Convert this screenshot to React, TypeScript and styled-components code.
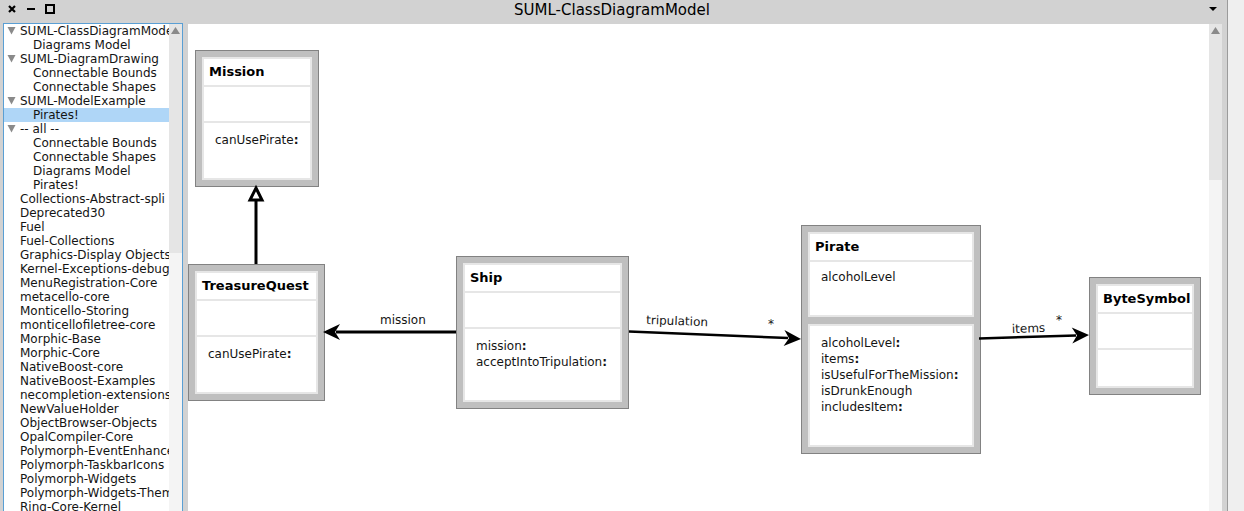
import React from 'react';
import styled, { createGlobalStyle } from 'styled-components';

const GlobalStyle = createGlobalStyle`
  *, *::before, *::after { box-sizing: border-box; }
  body {
    margin: 0;
    background: #efefef;
    color: #141414;
    font-family: 'DejaVu Sans', sans-serif;
    font-size: 12px;
  }
  button { font: inherit; color: inherit; }
  ul { list-style: none; margin: 0; padding: 0; }
`;

const Desktop = styled.div`
  display: flex;
  height: 100vh;
  padding-right: 16px;
  overflow: hidden;
`;

const Window = styled.main`
  flex: 1;
  min-width: 0;
  display: flex;
  flex-direction: column;
  background: #d2d2d2;
  border-right: 1px solid #9b9b9b;
`;

const TitleBar = styled.header`
  flex: none;
  height: 23px;
  display: grid;
  grid-template-columns: 1fr auto 1fr;
  align-items: start;
  padding: 0 8px 0 5px;
`;

const Title = styled.h1`
  margin: 0;
  font-size: 15px;
  line-height: 20px;
  font-weight: 400;
  color: #000;
`;

const WindowControls = styled.div<{ $end?: boolean }>`
  display: flex;
  gap: 6px;
  padding-top: 2px;
  justify-content: ${(p) => (p.$end ? 'flex-end' : 'flex-start')};
`;

const ControlButton = styled.button`
  display: flex;
  align-items: center;
  justify-content: center;
  width: 13px;
  height: 14px;
  padding: 0;
  border: 0;
  background: none;
`;

const Body = styled.div`
  flex: 1;
  min-height: 0;
  display: flex;
  gap: 5px;
  padding: 0 5px 0 3px;
`;

const Sidebar = styled.nav`
  flex: none;
  width: 180px;
  display: flex;
  background: #fff;
  border: 1px solid #5a9fd4;
  border-bottom: 0;
`;

const PackageList = styled.ul`
  flex: 1;
  min-width: 0;
  overflow: hidden;
`;

const PackageButton = styled.button<{ $level: number; $selected?: boolean }>`
  display: flex;
  align-items: center;
  width: 100%;
  height: 14px;
  padding: 0 0 0 ${(p) => (p.$level ? 29 : 3)}px;
  border: 0;
  background: ${(p) => (p.$selected ? '#afd6f7' : 'transparent')};
  line-height: 14px;
  text-align: left;
  white-space: nowrap;
`;

const Toggle = styled.span`
  flex: none;
  display: flex;
  width: 13px;
`;

const ScrollTrack = styled.div`
  flex: none;
  width: 13px;
  background: #f4f4f4;
`;

const ScrollThumb = styled.div<{ $size: number }>`
  display: flex;
  justify-content: center;
  height: ${(p) => p.$size}%;
  padding-top: 3px;
  background: #e5e5e5;
`;

const CanvasPane = styled.section`
  flex: 1;
  min-width: 0;
  display: flex;
  margin-top: 1px;
  background: #fff;
`;

const Canvas = styled.div`
  position: relative;
  flex: 1;
  min-width: 0;
  overflow: hidden;
`;

const Connectors = styled.svg`
  position: absolute;
  inset: 0;
  width: 100%;
  height: 100%;
`;

const ClassNode = styled.article<{ $x: number; $y: number; $width: number }>`
  position: absolute;
  left: ${(p) => p.$x}px;
  top: ${(p) => p.$y}px;
  width: ${(p) => p.$width}px;
  display: flex;
  flex-direction: column;
  gap: 7px;
  padding: 6px;
  background: #bfbfbf;
  border: 1px solid #828282;
`;

const NodePanel = styled.div`
  background: #fff;
  border: 2px solid #e6e6e6;
`;

const ClassName = styled.h2`
  margin: 0;
  height: 26px;
  padding-left: 5px;
  font-size: 13px;
  line-height: 26px;
  color: #000;
  white-space: nowrap;
`;

const Attributes = styled.ul`
  border-top: 2px solid #e6e6e6;
  padding: 7px 0 30px 11px;
  line-height: 16px;
  &:empty { padding: 17px 0; }
`;

const Methods = styled.ul<{ $detached?: boolean }>`
  border-top: ${(p) => (p.$detached ? '0' : '2px solid #e6e6e6')};
  padding: 9px 0 30px 11px;
  line-height: 16px;
  white-space: nowrap;
  &:empty { padding: 18px 0; }
`;

interface TreeItem {
  name: string;
  level?: number;
  parent?: boolean;
  selected?: boolean;
}

const packages: TreeItem[] = [
  { name: 'SUML-ClassDiagramModel', parent: true },
  { name: 'Diagrams Model', level: 1 },
  { name: 'SUML-DiagramDrawing', parent: true },
  { name: 'Connectable Bounds', level: 1 },
  { name: 'Connectable Shapes', level: 1 },
  { name: 'SUML-ModelExample', parent: true },
  { name: 'Pirates!', level: 1, selected: true },
  { name: '-- all --', parent: true },
  { name: 'Connectable Bounds', level: 1 },
  { name: 'Connectable Shapes', level: 1 },
  { name: 'Diagrams Model', level: 1 },
  { name: 'Pirates!', level: 1 },
  { name: 'Collections-Abstract-spli' },
  { name: 'Deprecated30' },
  { name: 'Fuel' },
  { name: 'Fuel-Collections' },
  { name: 'Graphics-Display Objects' },
  { name: 'Kernel-Exceptions-debug' },
  { name: 'MenuRegistration-Core' },
  { name: 'metacello-core' },
  { name: 'Monticello-Storing' },
  { name: 'monticellofiletree-core' },
  { name: 'Morphic-Base' },
  { name: 'Morphic-Core' },
  { name: 'NativeBoost-core' },
  { name: 'NativeBoost-Examples' },
  { name: 'necompletion-extensions' },
  { name: 'NewValueHolder' },
  { name: 'ObjectBrowser-Objects' },
  { name: 'OpalCompiler-Core' },
  { name: 'Polymorph-EventEnhance' },
  { name: 'Polymorph-TaskbarIcons' },
  { name: 'Polymorph-Widgets' },
  { name: 'Polymorph-Widgets-Them' },
  { name: 'Ring-Core-Kernel' },
];

interface UmlClass {
  name: string;
  x: number;
  y: number;
  width: number;
  attributes: string[];
  methods: string[];
}

const classes: UmlClass[] = [
  { name: 'Mission', x: 7, y: 26, width: 124, attributes: [], methods: ['canUsePirate:'] },
  { name: 'TreasureQuest', x: 0, y: 240, width: 137, attributes: [], methods: ['canUsePirate:'] },
  { name: 'Ship', x: 268, y: 232, width: 173, attributes: [], methods: ['mission:', 'acceptIntoTripulation:'] },
  {
    name: 'Pirate',
    x: 613,
    y: 201,
    width: 180,
    attributes: ['alcoholLevel'],
    methods: ['alcoholLevel:', 'items:', 'isUsefulForTheMission:', 'isDrunkEnough', 'includesItem:'],
  },
  { name: 'ByteSymbol', x: 901, y: 253, width: 112, attributes: [], methods: [] },
];

function ScrollBar({ size }: { size: number }) {
  return (
    <ScrollTrack>
      <ScrollThumb $size={size}>
        <svg width="9" height="7" viewBox="0 0 9 7" aria-hidden="true">
          <path d="M4.5 0 9 7H0Z" fill="#8a8a8a" />
        </svg>
      </ScrollThumb>
    </ScrollTrack>
  );
}

function Selector({ text }: { text: string }) {
  return text.endsWith(':') ? (
    <li>
      {text.slice(0, -1)}
      <b>:</b>
    </li>
  ) : (
    <li>{text}</li>
  );
}

function ClassBox({ item }: { item: UmlClass }) {
  const attributes = (
    <Attributes>
      {item.attributes.map((a) => (
        <Selector key={a} text={a} />
      ))}
    </Attributes>
  );
  const detached = item.attributes.length > 0;
  const methods = (
    <Methods $detached={detached}>
      {item.methods.map((m) => (
        <Selector key={m} text={m} />
      ))}
    </Methods>
  );
  return (
    <ClassNode $x={item.x} $y={item.y} $width={item.width}>
      <NodePanel>
        <ClassName>{item.name}</ClassName>
        {attributes}
        {!detached && methods}
      </NodePanel>
      {detached && <NodePanel>{methods}</NodePanel>}
    </ClassNode>
  );
}

function Arrow({ x, y, angle }: { x: number; y: number; angle: number }) {
  return <path d="M0 0-17-8-12 0-17 8Z" fill="#000" transform={`translate(${x} ${y}) rotate(${angle})`} />;
}

export default function App() {
  return (
    <>
      <GlobalStyle />
      <Desktop>
        <Window>
          <TitleBar>
            <WindowControls>
              <ControlButton aria-label="Close">
                <svg width="8" height="8" viewBox="0 0 8 8">
                  <path d="M1 1 7 7M7 1 1 7" stroke="#000" strokeWidth="2.2" />
                </svg>
              </ControlButton>
              <ControlButton aria-label="Minimize">
                <svg width="8" height="8" viewBox="0 0 8 8">
                  <path d="M0 3H8V5H0Z" />
                </svg>
              </ControlButton>
              <ControlButton aria-label="Maximize">
                <svg width="10" height="10" viewBox="0 0 10 10">
                  <path d="M1 1H9V9H1Z" fill="none" stroke="#000" strokeWidth="2" />
                </svg>
              </ControlButton>
            </WindowControls>
            <Title>SUML-ClassDiagramModel</Title>
            <WindowControls $end>
              <ControlButton aria-label="Window menu">
                <svg width="8" height="4" viewBox="0 0 8 4">
                  <path d="M0 0H8L4 4Z" />
                </svg>
              </ControlButton>
            </WindowControls>
          </TitleBar>
          <Body>
            <Sidebar aria-label="Packages">
              <PackageList>
                {packages.map((item, i) => (
                  <li key={i}>
                    <PackageButton
                      $level={item.level ?? 0}
                      $selected={item.selected}
                      aria-current={item.selected}
                    >
                      {!item.level && (
                        <Toggle>
                          {item.parent && (
                            <svg width="9" height="8" viewBox="0 0 9 8" aria-hidden="true">
                              <path d="M.5 0H8.500L4.500 7.500Z" fill="#8a8a8a" />
                            </svg>
                          )}
                        </Toggle>
                      )}
                      {item.name}
                    </PackageButton>
                  </li>
                ))}
              </PackageList>
              <ScrollBar size={47} />
            </Sidebar>
            <CanvasPane>
              <Canvas>
                {classes.map((item) => (
                  <ClassBox key={item.name} item={item} />
                ))}
                <Connectors>
                  <g stroke="#000" strokeWidth="3" fill="none">
                    <path d="M68 176V240" />
                    <path d="M148 308H268" />
                    <path d="M441 307.500 600 314" strokeWidth="2.500" />
                    <path d="M791 314.500 888 311.500" strokeWidth="2.500" />
                  </g>
                  <path d="M68 164 74 176H62Z" fill="#fff" stroke="#000" strokeWidth="3" />
                  <Arrow x={135} y={308} angle={180} />
                  <Arrow x={613} y={315} angle={3} />
                  <Arrow x={901} y={311} angle={-2} />
                  <g fill="#141414">
                    <text x="192" y="300">mission</text>
                    <text x="458" y="300" transform="rotate(2 458 300)">tripulation</text>
                    <text x="580" y="304">*</text>
                    <text x="824" y="309" transform="rotate(-2 824 309)">items</text>
                    <text x="868" y="300">*</text>
                  </g>
                </Connectors>
              </Canvas>
              <ScrollBar size={32} />
            </CanvasPane>
          </Body>
        </Window>
      </Desktop>
    </>
  );
}
